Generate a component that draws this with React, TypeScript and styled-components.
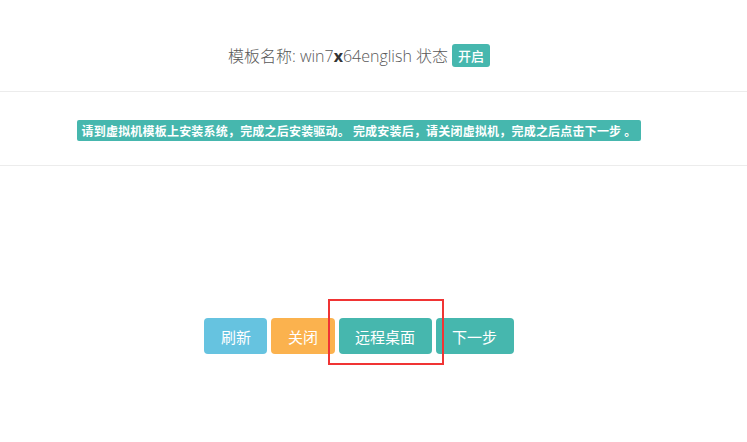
import React from "react";
import styled, { createGlobalStyle } from "styled-components";

const Global = createGlobalStyle`
  html, body { margin: 0; padding: 0; background: #fff; }
  body { font-family: "Open Sans", "Noto Sans CJK SC", sans-serif; color: #555; }
`;

const Page = styled.div`
  width: 747px;
  height: 442px;
  display: flex;
  flex-direction: column;
`;

const Section = styled.div<{ $h: number; $border?: boolean }>`
  height: ${(p) => p.$h}px;
  border-bottom: ${(p) => (p.$border ? "1px solid #ececec" : "none")};
  display: flex;
  align-items: center;
  justify-content: center;
  padding-right: 29px;
  box-sizing: border-box;
`;

const Title = styled.div`
  display: flex;
  align-items: center;
  gap: 4px;
  font-size: 16px;
  font-weight: 300;
  color: #585858;
  margin-top: 19px;
  b { font-weight: 700; color: #333; }
`;

const Badge = styled.span`
  display: inline-flex;
  align-items: center;
  justify-content: center;
  height: 23px;
  padding: 0 6px;
  border-radius: 3px;
  background: #46b7ae;
  color: #fff;
  font-size: 13px;
  font-weight: 500;
  font-family: "Noto Sans CJK SC", sans-serif;
`;

const Notice = styled.div`
  height: 21px;
  display: flex;
  align-items: center;
  padding: 0 5px;
  border-radius: 2px;
  background: #46b7ae;
  color: #fff;
  font-size: 12px;
  font-weight: 700;
  letter-spacing: 0.2px;
  font-family: "Noto Sans CJK SC", sans-serif;
  white-space: pre;
  margin-top: 3px;
`;

const ButtonRow = styled.div`
  display: flex;
  gap: 4px;
  position: relative;
  margin-top: 152px;
  padding-right: 29px;
  justify-content: center;
`;

const Btn = styled.button<{ $bg: string }>`
  height: 36px;
  padding: 0 16.5px;
  border: none;
  border-radius: 4px;
  background: ${(p) => p.$bg};
  color: #fff;
  font-size: 15px;
  font-family: "Noto Sans CJK SC", sans-serif;
  cursor: pointer;
`;

const Highlight = styled.div`
  position: absolute;
  left: 328px;
  top: -19px;
  width: 112px;
  height: 62px;
  border: 2px solid #f03434;
  pointer-events: none;
`;

export default function App() {
  return (
    <>
      <Global />
      <Page>
        <Section $h={92} $border>
          <Title>
            <span>
              模板名称: win7<b>x</b>64english 状态
            </span>
            <Badge>开启</Badge>
          </Title>
        </Section>
        <Section $h={74} $border>
          <Notice>请到虚拟机模板上安装系统，完成之后安装驱动。 完成安装后，请关闭虚拟机，完成之后点击下一步 。</Notice>
        </Section>
        <ButtonRow>
          <Btn $bg="#66c3e0">刷新</Btn>
          <Btn $bg="#fbb24e">关闭</Btn>
          <Btn $bg="#46b7ae">远程桌面</Btn>
          <Btn $bg="#46b7ae">下一步</Btn>
          <Highlight />
        </ButtonRow>
      </Page>
    </>
  );
}
